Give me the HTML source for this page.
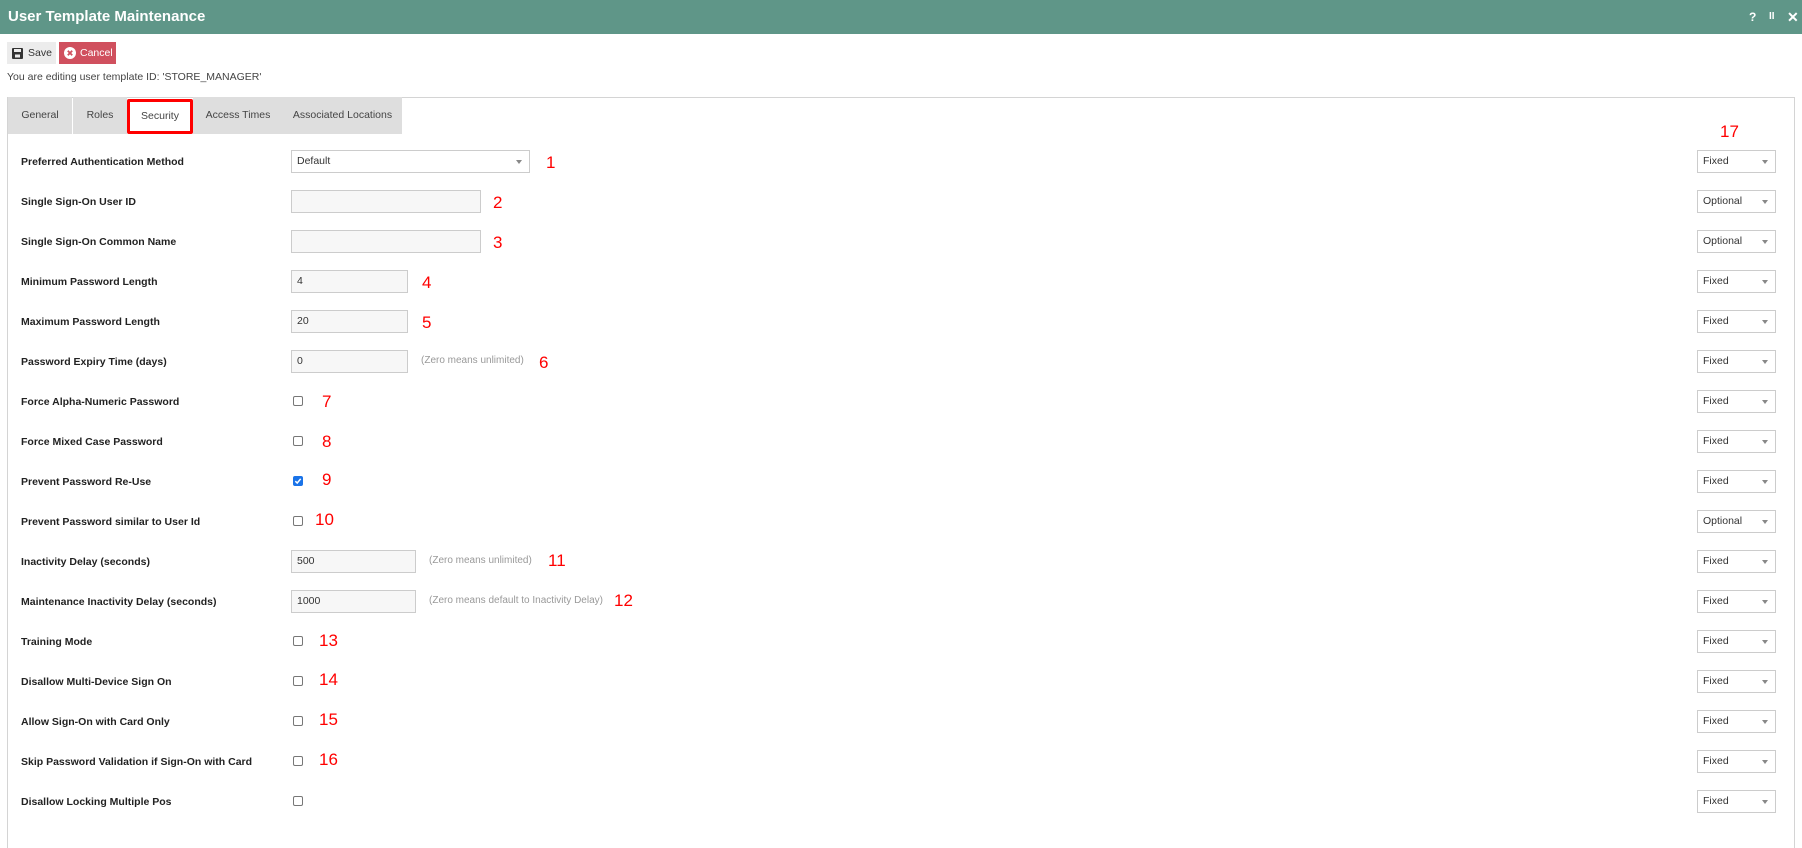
<!DOCTYPE html>
<html style="overflow:hidden;height:848px"><head><meta charset="utf-8"><style>
*{box-sizing:border-box;margin:0;padding:0}
body{width:1802px;height:848px;overflow:hidden;background:#fff;font-family:"Liberation Sans",Arial,sans-serif;position:relative;color:#333}
.a{position:absolute}
.title{left:0;top:0;width:1802px;height:34px;background:#5f9688;color:#fff;font-weight:bold;font-size:15px;line-height:34px;padding-left:8px}
.ti{top:0;line-height:34px;color:#fff;font-weight:bold;font-size:12px}
.btn{height:22px;line-height:22px;font-size:10.5px}
.panel{left:7px;top:97px;width:1788px;height:751px;border:1px solid #d4d4d4;border-bottom:none}
.tab{top:97px;height:37px;background:#dedede;font-size:10.5px;line-height:37px;text-align:center;color:#444}
.lbl{left:21px;font-size:10.5px;font-weight:bold;color:#222;line-height:14px}
.inp{left:291px;height:23px;border:1px solid #ccc;background:#f7f7f7;font-size:10.5px;line-height:21px;padding-left:5px;color:#333}
.sel{height:23px;border:1px solid #ccc;background:#fff;font-size:10.5px;line-height:21px;padding-left:5px;color:#333}
.sel:after{content:"";position:absolute;right:7px;top:9px;border:3.5px solid transparent;border-top:4px solid #888}
.rs{left:1697px;width:79px}
.cb{left:293px;width:10px;height:10px;border:1px solid #777;border-radius:2px;background:#fff}
.num{color:#f00;font-size:17px;line-height:20px}
.hint{font-size:10px;color:#999;line-height:14px}
</style></head><body>
<div class="a title">User Template Maintenance</div>
<div class="a ti" style="left:1749px">?</div>
<div class="a ti" style="left:1769px;font-size:10px">II</div>
<div class="a ti" style="left:1787px;font-size:14px">✕</div>
<div class="a btn" style="left:7px;top:42px;width:49px;background:#ececec;color:#333">
<svg class="a" style="left:5px;top:6px" width="11" height="11" viewBox="0 0 11 11"><rect x="0" y="0" width="11" height="11" rx="1" fill="#333"/><rect x="2" y="1" width="7" height="3" fill="#ececec"/><rect x="3" y="6.5" width="5" height="3" fill="#ececec"/></svg>
<span class="a" style="left:21px">Save</span></div>
<div class="a btn" style="left:59px;top:42px;width:57px;background:#d0505e;color:#fff">
<svg class="a" style="left:5px;top:5px" width="12" height="12" viewBox="0 0 12 12"><circle cx="6" cy="6" r="6" fill="#fff"/><path d="M3.8 3.8L8.2 8.2M8.2 3.8L3.8 8.2" stroke="#d0505e" stroke-width="1.8"/></svg>
<span class="a" style="left:21px">Cancel</span></div>
<div class="a" style="left:7px;top:71px;font-size:10.5px;color:#444">You are editing user template ID: 'STORE_MANAGER'</div>
<div class="a panel"></div>
<div class="a tab" style="left:8px;width:64px">General</div>
<div class="a tab" style="left:73px;width:54px">Roles</div>
<div class="a tab" style="left:127px;width:66px;background:#fff;border:3px solid #f00;border-radius:2px;top:99px;height:35px;line-height:29px">Security</div>
<div class="a tab" style="left:193px;width:90px">Access Times</div>
<div class="a tab" style="left:283px;width:119px">Associated Locations</div>
<div class="a num" style="left:1720px;top:122px">17</div>

<div class="a lbl" style="top:155px">Preferred Authentication Method</div>
<div class="a sel" style="left:291px;top:150px;width:239px">Default</div>
<div class="a num" style="left:546px;top:153px">1</div>

<div class="a lbl" style="top:195px">Single Sign-On User ID</div>
<div class="a inp" style="top:190px;width:190px"></div>
<div class="a num" style="left:493px;top:193px">2</div>

<div class="a lbl" style="top:235px">Single Sign-On Common Name</div>
<div class="a inp" style="top:230px;width:190px"></div>
<div class="a num" style="left:493px;top:233px">3</div>

<div class="a lbl" style="top:275px">Minimum Password Length</div>
<div class="a inp" style="top:270px;width:117px">4</div>
<div class="a num" style="left:422px;top:273px">4</div>

<div class="a lbl" style="top:315px">Maximum Password Length</div>
<div class="a inp" style="top:310px;width:117px">20</div>
<div class="a num" style="left:422px;top:313px">5</div>

<div class="a lbl" style="top:355px">Password Expiry Time (days)</div>
<div class="a inp" style="top:350px;width:117px">0</div>
<div class="a hint" style="left:421px;top:354px">(Zero means unlimited)</div>
<div class="a num" style="left:539px;top:353px">6</div>

<div class="a lbl" style="top:395px">Force Alpha-Numeric Password</div>
<div class="a cb" style="top:396px"></div>
<div class="a num" style="left:322px;top:392px">7</div>

<div class="a lbl" style="top:435px">Force Mixed Case Password</div>
<div class="a cb" style="top:436px"></div>
<div class="a num" style="left:322px;top:432px">8</div>

<div class="a lbl" style="top:475px">Prevent Password Re-Use</div>
<div class="a cb" style="top:476px;background:#1a73e8;border-color:#1a73e8"><svg class="a" style="left:0;top:0" width="8" height="8" viewBox="0 0 8 8"><path d="M1.3 4.2L3.2 6L6.7 1.8" stroke="#fff" stroke-width="1.5" fill="none"/></svg></div>
<div class="a num" style="left:322px;top:470px">9</div>

<div class="a lbl" style="top:515px">Prevent Password similar to User Id</div>
<div class="a cb" style="top:516px"></div>
<div class="a num" style="left:315px;top:510px">10</div>

<div class="a lbl" style="top:555px">Inactivity Delay (seconds)</div>
<div class="a inp" style="top:550px;width:125px">500</div>
<div class="a hint" style="left:429px;top:554px">(Zero means unlimited)</div>
<div class="a num" style="left:548px;top:551px">11</div>

<div class="a lbl" style="top:595px">Maintenance Inactivity Delay (seconds)</div>
<div class="a inp" style="top:590px;width:125px">1000</div>
<div class="a hint" style="left:429px;top:594px">(Zero means default to Inactivity Delay)</div>
<div class="a num" style="left:614px;top:591px">12</div>

<div class="a lbl" style="top:635px">Training Mode</div>
<div class="a cb" style="top:636px"></div>
<div class="a num" style="left:319px;top:631px">13</div>

<div class="a lbl" style="top:675px">Disallow Multi-Device Sign On</div>
<div class="a cb" style="top:676px"></div>
<div class="a num" style="left:319px;top:670px">14</div>

<div class="a lbl" style="top:715px">Allow Sign-On with Card Only</div>
<div class="a cb" style="top:716px"></div>
<div class="a num" style="left:319px;top:710px">15</div>

<div class="a lbl" style="top:755px">Skip Password Validation if Sign-On with Card</div>
<div class="a cb" style="top:756px"></div>
<div class="a num" style="left:319px;top:750px">16</div>

<div class="a lbl" style="top:795px">Disallow Locking Multiple Pos</div>
<div class="a cb" style="top:796px"></div>

<div class="a sel rs" style="top:150px">Fixed</div>
<div class="a sel rs" style="top:190px">Optional</div>
<div class="a sel rs" style="top:230px">Optional</div>
<div class="a sel rs" style="top:270px">Fixed</div>
<div class="a sel rs" style="top:310px">Fixed</div>
<div class="a sel rs" style="top:350px">Fixed</div>
<div class="a sel rs" style="top:390px">Fixed</div>
<div class="a sel rs" style="top:430px">Fixed</div>
<div class="a sel rs" style="top:470px">Fixed</div>
<div class="a sel rs" style="top:510px">Optional</div>
<div class="a sel rs" style="top:550px">Fixed</div>
<div class="a sel rs" style="top:590px">Fixed</div>
<div class="a sel rs" style="top:630px">Fixed</div>
<div class="a sel rs" style="top:670px">Fixed</div>
<div class="a sel rs" style="top:710px">Fixed</div>
<div class="a sel rs" style="top:750px">Fixed</div>
<div class="a sel rs" style="top:790px">Fixed</div>
</body></html>
